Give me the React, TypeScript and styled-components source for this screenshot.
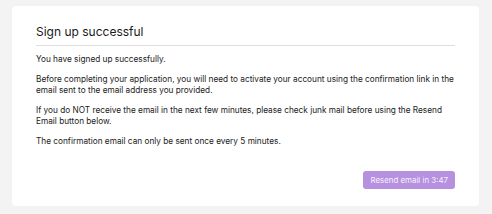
import React from "react";
import styled, { createGlobalStyle } from "styled-components";

const GlobalStyle = createGlobalStyle`
  html, body {
    margin: 0;
    padding: 0;
    background: #f3f3f3;
  }
  body {
    font-family: Inter, "Noto Sans", sans-serif;
    color: #1f1f1f;
  }
`;

const Page = styled.div`
  padding: 6px 13px 8px 12px;
`;

const Card = styled.div`
  background: #ffffff;
  border-radius: 4px;
  padding: 14px 24px 17px;
  display: flex;
  flex-direction: column;
`;

const Title = styled.h1`
  margin: 0;
  font-size: 12px;
  font-weight: 400;
  line-height: 24px;
  color: #1a1a1a;
  padding-bottom: 1px;
  border-bottom: 1px solid #dedede;
`;

const Body = styled.div`
  padding-top: 8px;
  display: flex;
  flex-direction: column;
  gap: 8px;
`;

const Paragraph = styled.p`
  margin: 0;
  font-size: 8.25px;
  line-height: 11.5px;
  color: #222222;
`;

const Footer = styled.div`
  display: flex;
  justify-content: flex-end;
  margin-top: 24px;
`;

const ResendButton = styled.button<{ $disabled?: boolean }>`
  height: 18px;
  padding: 0 7px;
  border: none;
  border-radius: 3px;
  background: ${(p) => (p.$disabled ? "#b591e0" : "#8a4fd6")};
  color: #f6f0fd;
  font-family: Inter, "Noto Sans", sans-serif;
  font-size: 7.9px;
  cursor: ${(p) => (p.$disabled ? "default" : "pointer")};
`;

const paragraphs = [
  "You have signed up successfully.",
  "Before completing your application, you will need to activate your account using the confirmation link in the email sent to the email address you provided.",
  "If you do NOT receive the email in the next few minutes, please check junk mail before using the Resend Email button below.",
  "The confirmation email can only be sent once every 5 minutes.",
];

export default function App() {
  return (
    <>
      <GlobalStyle />
      <Page>
        <Card>
          <Title>Sign up successful</Title>
          <Body>
            {paragraphs.map((text) => (
              <Paragraph key={text}>{text}</Paragraph>
            ))}
          </Body>
          <Footer>
            <ResendButton $disabled>Resend email in 3:47</ResendButton>
          </Footer>
        </Card>
      </Page>
    </>
  );
}
